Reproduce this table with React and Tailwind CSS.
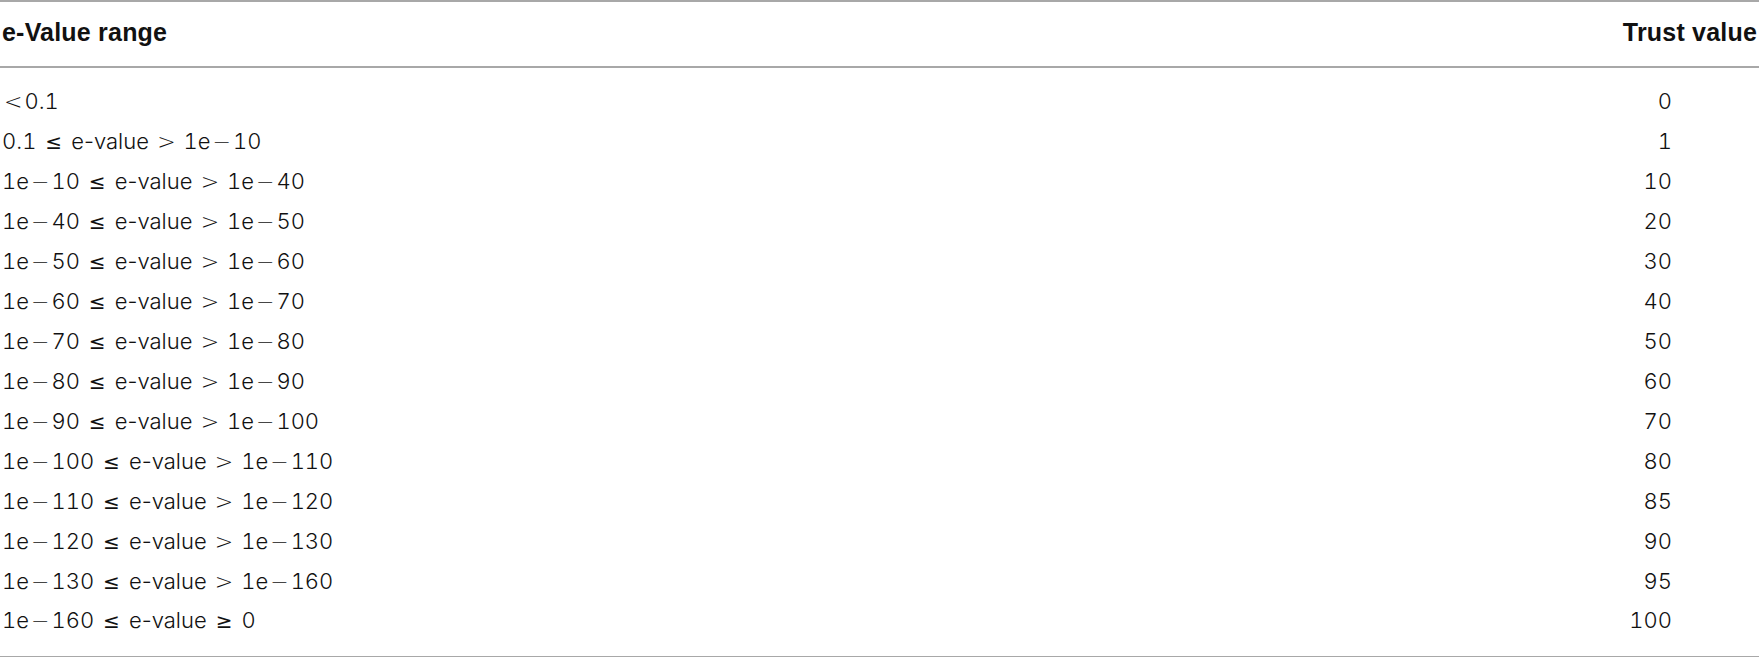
const rows = [
  ['<0.1', '0'],
  ['0.1 ≤ e-value > 1e−10', '1'],
  ['1e−10 ≤ e-value > 1e−40', '10'],
  ['1e−40 ≤ e-value > 1e−50', '20'],
  ['1e−50 ≤ e-value > 1e−60', '30'],
  ['1e−60 ≤ e-value > 1e−70', '40'],
  ['1e−70 ≤ e-value > 1e−80', '50'],
  ['1e−80 ≤ e-value > 1e−90', '60'],
  ['1e−90 ≤ e-value > 1e−100', '70'],
  ['1e−100 ≤ e-value > 1e−110', '80'],
  ['1e−110 ≤ e-value > 1e−120', '85'],
  ['1e−120 ≤ e-value > 1e−130', '90'],
  ['1e−130 ≤ e-value > 1e−160', '95'],
  ['1e−160 ≤ e-value ≥ 0', '100'],
];

// math symbols are set wider than the text face in the original
const Range = ({ text }) =>
  text.split(/([−≤≥<>])/).map((part, i) => {
    if (part === '≤' || part === '≥')
      return (
        <span key={i} className="inline-block px-[3px] font-['DejaVu_Sans',sans-serif] font-normal text-[20px] leading-none">
          {part}
        </span>
      );
    if (/[−<>]/.test(part))
      return (
        <span key={i} className="inline-block px-[2px] font-['DejaVu_Sans',sans-serif] font-extralight leading-none">
          {part}
        </span>
      );
    return (
      <span key={i} className={part.includes('value') ? '' : 'tabular-nums'}>
        {part}
      </span>
    );
  });

export default function App() {
  return (
    <div className="w-[1759px] h-[657px] bg-white text-[#111] font-['Liberation_Sans',Arial,sans-serif]">
      <table className="w-full border-collapse">
        <thead>
          <tr className="border-t-2 border-b-2 border-[#a8a8a8]">
            <th className="h-[66px] pl-[2px] pb-[2px] text-left text-[25px] font-bold tracking-[0.2px]">e-Value range</th>
            <th className="h-[66px] pr-[2px] pb-[2px] text-right text-[25px] font-bold tracking-[0.2px]">Trust value</th>
          </tr>
        </thead>
        <tbody className="border-b-2 border-[#a8a8a8] font-['Inter',sans-serif] font-light text-[22px]">
          {rows.map(([range, trust], i) => {
            const first = i === 0;
            const last = i === rows.length - 1;
            const pad = first ? 'h-[54px] pt-[14px]' : last ? 'h-[56px] pb-[16px]' : 'h-[40px]';
            return (
              <tr key={range}>
                <td className={`pl-[2px] whitespace-pre ${pad}`}>
                  <Range text={range} />
                </td>
                <td className={`pr-[87px] text-right tabular-nums ${pad}`}>{trust}</td>
              </tr>
            );
          })}
        </tbody>
      </table>
    </div>
  );
}
